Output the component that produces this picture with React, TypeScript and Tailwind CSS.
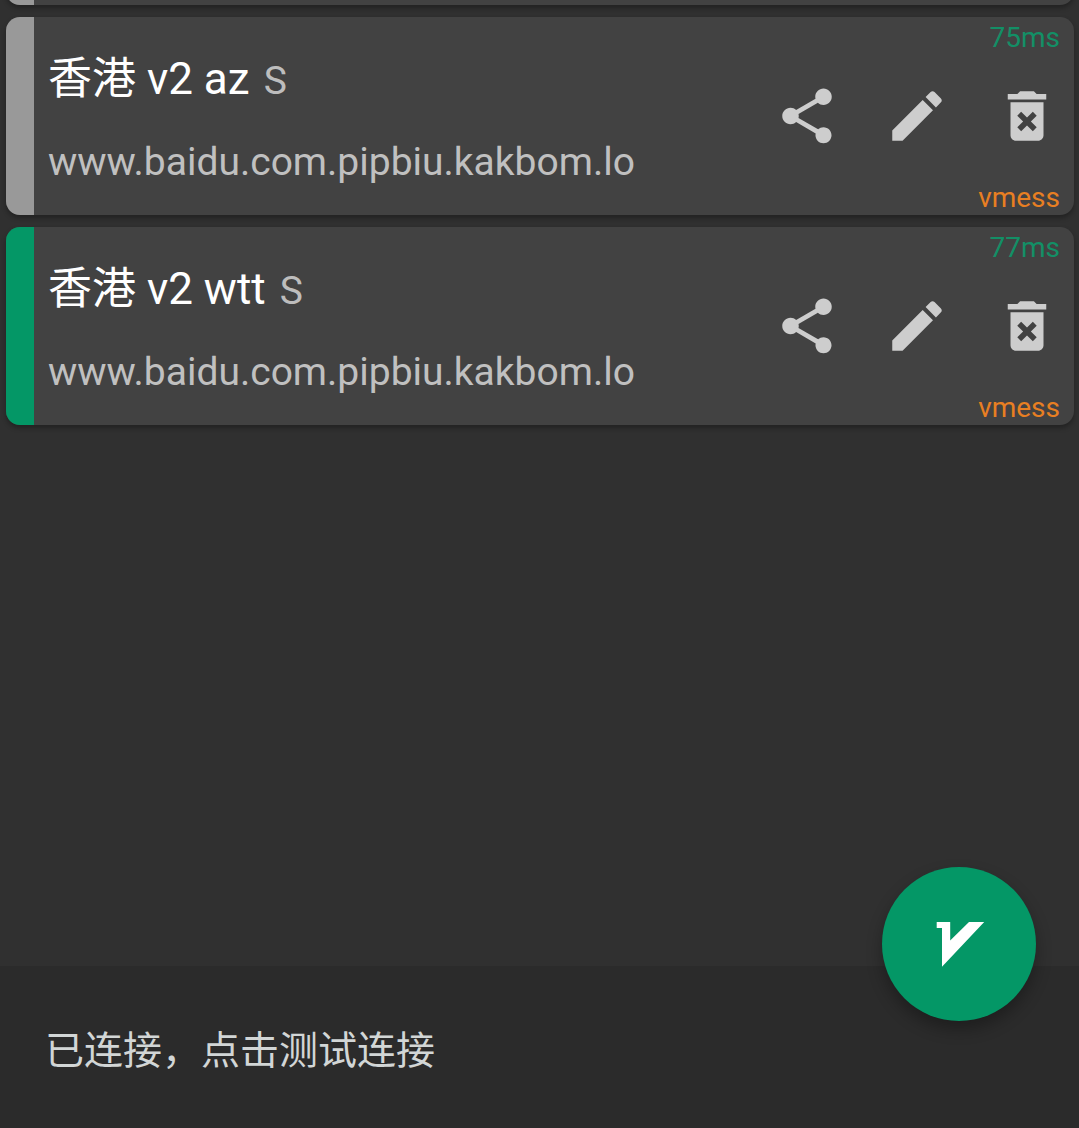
import type { ReactNode } from 'react';

type Server = {
  name: string;
  group: string;
  address: string;
  delay: string;
  protocol: string;
  active: boolean;
};

const servers: Server[] = [
  { name: '香港 v2 az', group: 'S', address: 'www.baidu.com.pipbiu.kakbom.lo', delay: '75ms', protocol: 'vmess', active: false },
  { name: '香港 v2 wtt', group: 'S', address: 'www.baidu.com.pipbiu.kakbom.lo', delay: '77ms', protocol: 'vmess', active: true },
];

const SHARE =
  'M18 16.08c-.76 0-1.44.3-1.96.77L8.91 12.7c.05-.23.09-.46.09-.7s-.04-.47-.09-.7l7.05-4.11c.54.5 1.25.81 2.04.81 1.66 0 3-1.34 3-3s-1.34-3-3-3-3 1.34-3 3c0 .24.04.47.09.7L8.04 9.81C7.5 9.31 6.79 9 6 9c-1.66 0-3 1.34-3 3s1.34 3 3 3c.79 0 1.5-.31 2.04-.81l7.12 4.16c-.05.21-.08.43-.08.65 0 1.61 1.31 2.92 2.92 2.92s2.92-1.31 2.92-2.92-1.31-2.92-2.92-2.92z';
const EDIT =
  'M3 17.25V21h3.75L17.81 9.94l-3.75-3.75L3 17.25zM20.71 7.04c.39-.39.39-1.02 0-1.41l-2.34-2.34c-.39-.39-1.02-.39-1.41 0l-1.83 1.83 3.75 3.75 1.83-1.83z';
const DELETE =
  'M6 19c0 1.1.9 2 2 2h8c1.1 0 2-.9 2-2V7H6v12zm2.46-7.12l1.41-1.41L12 12.59l2.12-2.12 1.41 1.41L13.41 14l2.12 2.12-1.41 1.41L12 15.41l-2.12 2.12-1.41-1.41L10.59 14l-2.13-2.12zM15.5 4l-1-1h-5l-1 1H5v2h14V4z';

function IconButton({ label, d }: { label: string; d: string }) {
  return (
    <button type="button" aria-label={label} className="text-[#cdcdcd]">
      <svg viewBox="0 0 24 24" className="size-[66px]" fill="currentColor" aria-hidden="true">
        <path d={d} />
      </svg>
    </button>
  );
}

function Card({ active, children }: { active: boolean; children?: ReactNode }) {
  return (
    <div className="flex w-full shrink-0 overflow-hidden rounded-[14px] bg-[#424242] shadow-[0_3px_5px_rgba(0,0,0,0.3)]">
      <div className={active ? 'w-7 shrink-0 bg-[#049766]' : 'w-7 shrink-0 bg-[#999999]'} />
      {children}
    </div>
  );
}

function ServerCard({ server }: { server: Server }) {
  return (
    <Card active={server.active}>
      <div className="flex min-w-0 grow flex-col gap-8 pt-9 pb-7 pl-[14px]">
        <h2 className="flex items-baseline gap-[14px] text-[44px] leading-[52px] text-white">
          {server.name}
          <span className="text-[39px] leading-none text-[#bdbdbd]">{server.group}</span>
        </h2>
        <p className="truncate text-[39px] leading-[50px] text-[#c0c0c0]">{server.address}</p>
      </div>
      <div className="flex shrink-0 flex-col items-end justify-between pt-[5px] pr-[14px] pb-px text-[28px] leading-8">
        <span className="text-[#138f66]">{server.delay}</span>
        <div className="mb-1 flex gap-11">
          <IconButton label="分享" d={SHARE} />
          <IconButton label="编辑" d={EDIT} />
          <IconButton label="删除" d={DELETE} />
        </div>
        <span className="text-[#e87f22]">{server.protocol}</span>
      </div>
    </Card>
  );
}

export default function App() {
  return (
    <div className="flex min-h-screen flex-col bg-[#303030] font-['Roboto','Noto_Sans_CJK_SC',sans-serif]">
      <main className="flex grow flex-col gap-3 pr-[5px] pl-[6px]">
        {/* Tail of the card scrolled past the top edge */}
        <div className="flex h-[5px] flex-col justify-end [clip-path:inset(0_-6px_-12px_-6px)]">
          <Card active={false}>
            <div className="h-10" />
          </Card>
        </div>
        {servers.map((s) => (
          <ServerCard key={s.name} server={s} />
        ))}
      </main>
      <footer className="relative bg-[#2b2b2b]">
        <button type="button" className="w-full px-[45px] pt-[57px] pb-[49px] text-left text-[39px] leading-[56px] text-[#d2d6d6]">
          已连接，点击测试连接
        </button>
        <button
          type="button"
          aria-label="断开连接"
          className="absolute -top-[99px] right-[43px] flex size-[154px] items-center justify-center rounded-full bg-[#049766] shadow-[0_8px_16px_rgba(0,0,0,0.3)]"
        >
          <svg viewBox="0 0 66 66" className="size-[66px]" fill="#ffffff" aria-hidden="true">
            <path d="M10.7 11h13.5v18.5L43 11h15.2L16 55.7V17h-5.3z" />
          </svg>
        </button>
      </footer>
    </div>
  );
}
